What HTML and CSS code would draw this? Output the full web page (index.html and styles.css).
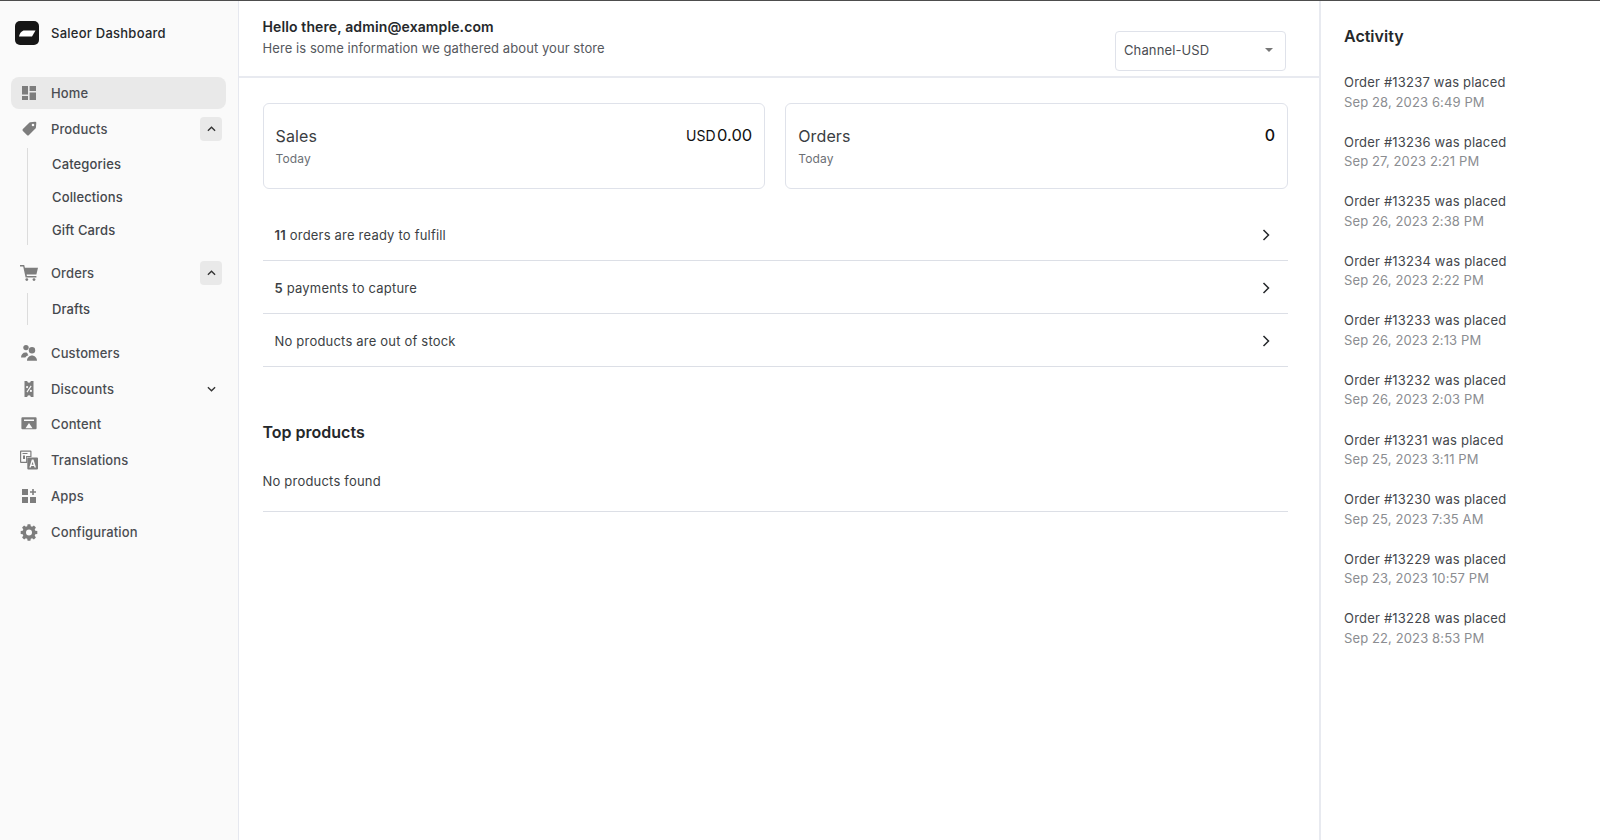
FILE: index.html
```html
<!DOCTYPE html>
<html lang="en">
<head>
  <meta charset="UTF-8" />
  <title>Saleor Dashboard</title>
  <link rel="stylesheet" href="styles.css">
</head>
<body>
  <div class="app">

    <aside class="sidebar">
      <div class="brand">
        <svg class="brand-logo" viewBox="0 0 24 24"><rect width="24" height="24" rx="5" fill="#161616"/><path d="M8.500 9.500h12L17 15.500H4c.6-3 2-5 4.500-6z" fill="#fff"/></svg>
        <span>Saleor Dashboard</span>
      </div>

      <nav class="nav">
        <a class="nav-item active">
          <svg class="nav-icon" viewBox="0 0 16 16"><path d="M1 1h6v8.500H1zM8.600 1H15v5H8.600zM8.600 7.500H15V15H8.600zM1 11h6v4H1z"/></svg>
          Home
        </a>
        <a class="nav-item">
          <svg class="nav-icon" viewBox="0 0 16 16"><path fill-rule="evenodd" d="M9.400 1.200L14 .8a1.200 1.200 0 0 1 1.300 1.300l-.4 4.600a1.500 1.500 0 0 1-.45.9L8 14.100a1.500 1.500 0 0 1-2.100 0L1.900 10.100a1.500 1.500 0 0 1 0-2.100l6.600-6.400a1.500 1.500 0 0 1 .9-.4zM12 5.300a1.300 1.300 0 1 0 0-2.600 1.300 1.300 0 0 0 0 2.600z"/></svg>
          Products
          <span class="toggle open"><svg viewBox="0 0 10 6"><path d="M1 5l4-4 4 4"/></svg></span>
        </a>
        <div class="subnav">
          <a>Categories</a>
          <a>Collections</a>
          <a>Gift Cards</a>
        </div>
        <a class="nav-item">
          <svg class="nav-icon" viewBox="0 0 16 16"><path d="M-1 0h4.200l.7 2.800H17l-1.600 6.800H5.600l.3 1.400h9.500v1.400H4.600L2.200 1.400H-1z"/><circle cx="5.800" cy="14.600" r="1.400"/><circle cx="13" cy="14.600" r="1.400"/></svg>
          Orders
          <span class="toggle open"><svg viewBox="0 0 10 6"><path d="M1 5l4-4 4 4"/></svg></span>
        </a>
        <div class="subnav subnav-short">
          <a>Drafts</a>
        </div>
        <a class="nav-item">
          <svg class="nav-icon" viewBox="0 0 16 16"><circle cx="5" cy="2.600" r="2.700"/><circle cx="11" cy="5.200" r="3.200"/><path d="M0 12.500c0-3 2-5 4.500-5 .7 0 1.300.1 1.800.4.200 1 .5 1.700 1.200 2.400-1.700.7-2.700 1.500-3.200 2.200zM6 15.800c0-3 2.500-5.200 5-5.200s5 2.200 5 5.200z"/></svg>
          Customers
        </a>
        <a class="nav-item">
          <svg class="nav-icon" viewBox="0 0 16 16"><path fill-rule="evenodd" d="M3.500 0h2.700a1.800 1.800 0 0 0 3.600 0h2.700v16H9.800a1.800 1.800 0 0 0-3.600 0H3.500zM9.700 4.600L5.500 10.800l.9.600 4.200-6.200zM6.100 5a1.100 1.100 0 1 0 0 2.200 1.100 1.100 0 0 0 0-2.200zM9.900 8.800a1.100 1.100 0 1 0 0 2.200 1.100 1.100 0 0 0 0-2.200z"/></svg>
          Discounts
          <span class="toggle"><svg viewBox="0 0 10 6"><path d="M1 1l4 4 4-4"/></svg></span>
        </a>
        <a class="nav-item">
          <svg class="nav-icon" viewBox="0 0 16 16"><path fill-rule="evenodd" d="M1.400 1.300h13.200a1 1 0 0 1 1 1v10a1 1 0 0 1-1 1H1.400a1 1 0 0 1-1-1v-10a1 1 0 0 1 1-1zM3 3.500V5h10V3.500zM8 7l-3.500 5.200h7z"/></svg>
          Content
        </a>
        <a class="nav-item">
          <svg class="nav-icon" viewBox="0 0 16 16"><path fill-rule="evenodd" d="M0-1.500h9.500a1 1 0 0 1 1 1V5H6.300v6H0a1 1 0 0 1-1-1V-.5a1 1 0 0 1 1-1zM.2-.3V9.800h4.900V4h4.200V-.3z"/><path d="M1.500 1h5v1h-5zM2 3.500h2v3.500H2z"/><path fill-rule="evenodd" d="M7.300 5.500H16a1 1 0 0 1 1 1v10a1 1 0 0 1-1 1H7.300a1 1 0 0 1-1-1v-10a1 1 0 0 1 1-1zM10.800 7.500L8.300 15.500h1.500l.5-1.600h2.700l.5 1.600h1.500l-2.500-8zm.8 2.200l.9 3h-1.800z"/></svg>
          Translations
        </a>
        <a class="nav-item">
          <svg class="nav-icon" viewBox="0 0 16 16"><path d="M1 1h6v6H1zM1 9h6v6H1zM9 9h6v6H9zM11.200 1h1.600v2.200H15v1.600h-2.200V7h-1.600V4.800H9V3.200h2.200z"/></svg>
          Apps
        </a>
        <a class="nav-item">
          <svg class="nav-icon" viewBox="0 0 16 16"><path fill-rule="evenodd" d="M6.600.2h2.800l.4 2 1.300.6 1.800-1.200 2 2-1.200 1.800.6 1.300 2 .4v2.800l-2 .4-.6 1.300 1.200 1.800-2 2-1.800-1.200-1.300.6-.4 2H6.600l-.4-2-1.300-.6-1.800 1.200-2-2 1.200-1.800-.6-1.300-2-.4V7.100l2-.4.6-1.300-1.200-1.800 2-2 1.800 1.200 1.300-.6zM8 5.500a3 3 0 1 0 0 6 3 3 0 0 0 0-6z"/></svg>
          Configuration
        </a>
      </nav>
    </aside>

    <main class="main">
      <header class="topbar">
        <div>
          <div class="hello">Hello there, admin@example.com</div>
          <div class="hello-sub">Here is some information we gathered about your store</div>
        </div>
        <div class="channel">
          Channel-USD
          <span class="caret"></span>
        </div>
      </header>

      <div class="content">
        <div class="cards">
          <div class="card">
            <div>
              <div class="card-title">Sales</div>
              <div class="card-sub">Today</div>
            </div>
            <div class="card-value"><small>USD</small><span class="money">0.00</span></div>
          </div>
          <div class="card">
            <div>
              <div class="card-title">Orders</div>
              <div class="card-sub">Today</div>
            </div>
            <div class="card-value">0</div>
          </div>
        </div>

        <div class="rows">
          <a class="row"><span><b>11</b> orders are ready to fulfill</span><svg class="chevron" viewBox="0 0 8 12"><path d="M1.500 1l5 5-5 5"/></svg></a>
          <a class="row"><span><b>5</b> payments to capture</span><svg class="chevron" viewBox="0 0 8 12"><path d="M1.500 1l5 5-5 5"/></svg></a>
          <a class="row"><span>No products are out of stock</span><svg class="chevron" viewBox="0 0 8 12"><path d="M1.500 1l5 5-5 5"/></svg></a>
        </div>

        <h2 class="section-title">Top products</h2>
        <div class="empty">No products found</div>
      </div>
    </main>

    <aside class="activity">
      <h2>Activity</h2>
      <ul>
        <li>Order #13237 was placed<time>Sep 28, 2023 6:49 PM</time></li>
        <li>Order #13236 was placed<time>Sep 27, 2023 2:21 PM</time></li>
        <li>Order #13235 was placed<time>Sep 26, 2023 2:38 PM</time></li>
        <li>Order #13234 was placed<time>Sep 26, 2023 2:22 PM</time></li>
        <li>Order #13233 was placed<time>Sep 26, 2023 2:13 PM</time></li>
        <li>Order #13232 was placed<time>Sep 26, 2023 2:03 PM</time></li>
        <li>Order #13231 was placed<time>Sep 25, 2023 3:11 PM</time></li>
        <li>Order #13230 was placed<time>Sep 25, 2023 7:35 AM</time></li>
        <li>Order #13229 was placed<time>Sep 23, 2023 10:57 PM</time></li>
        <li>Order #13228 was placed<time>Sep 22, 2023 8:53 PM</time></li>
      </ul>
    </aside>

  </div>
</body>
</html>
```

FILE: styles.css
```css
html, body {
  margin: 0;
  padding: 0;
  height: 100%;
  background: #fff;
  color: #25282b;
  font-family: Inter, 'Noto Sans', sans-serif;
  font-size: 13px;
  letter-spacing: 0.12px;
  overflow: hidden;
}

.app {
  display: flex;
  height: 840px;
  box-sizing: border-box;
  border-top: 1px solid #4d4d4d;
}

/* left nav */
.sidebar {
  width: 239px;
  flex: none;
  box-sizing: border-box;
  background: #fafafa;
  border-right: 1px solid #e6e8ef;
  padding: 0 12px 0 11px;
}

.brand {
  display: flex;
  align-items: center;
  gap: 12px;
  height: 64px;
  padding-left: 4px;
  font-weight: 500;
  letter-spacing: 0.25px;
  color: #25282b;
}

.brand-logo {
  width: 24px;
  height: 24px;
}

.nav {
  margin-top: 12px;
}

.nav-item {
  display: flex;
  align-items: center;
  height: 32px;
  margin-bottom: 3.7px;
  padding-left: 10px;
  border-radius: 8px;
  font-weight: 500;
  color: #4a4d52;
}

.nav-item.active {
  background: #e9e9e9;
}

.nav-icon {
  width: 16px;
  height: 16px;
  margin-right: 14px;
  fill: #7d7d7d;
  flex: none;
  overflow: visible;
}

.toggle {
  margin-left: auto;
  margin-right: 4px;
  width: 22px;
  height: 24px;
  border-radius: 4px;
  display: flex;
  align-items: center;
  justify-content: center;
}

.toggle.open {
  background: #e9e9e9;
}

.toggle svg {
  width: 9px;
  height: 6px;
  fill: none;
  stroke: #333;
  stroke-width: 1.5;
}

.subnav {
  display: flex;
  flex-direction: column;
  margin: 0 0 12px 16px;
  padding-left: 24px;
  border-left: 1px solid #dcdcdc;
  height: 97px;
}

.subnav a {
  height: 32.8px;
  line-height: 32.8px;
  font-weight: 500;
  color: #44474c;
}

.subnav-short {
  height: 32px;
}

/* center column */
.main {
  flex: 1;
  min-width: 0;
  border-right: 2px solid #e8eaf0;
}

.topbar {
  display: flex;
  justify-content: space-between;
  align-items: flex-start;
  height: 77px;
  box-sizing: border-box;
  border-bottom: 2px solid #e8eaf0;
  padding: 17px 33px 0 23.5px;
}

.hello {
  font-size: 14px;
  font-weight: 600;
  line-height: 18px;
}

.hello-sub {
  margin-top: 3px;
  line-height: 18px;
  letter-spacing: 0.07px;
  color: #55585d;
}

.channel {
  width: 171px;
  height: 40px;
  margin-top: 13px;
  box-sizing: border-box;
  display: flex;
  align-items: center;
  justify-content: space-between;
  padding: 0 12px 2px 8px;
  border: 1px solid #dfe2ea;
  border-radius: 4px;
  color: #4a4d52;
}

.caret {
  border-left: 4px solid transparent;
  border-right: 4px solid transparent;
  border-top: 4px solid #777;
}

.content {
  padding: 25px 31px 0 23.5px;
}

.cards {
  display: flex;
  gap: 20px;
}

.card {
  flex: 1;
  height: 86px;
  box-sizing: border-box;
  display: flex;
  justify-content: space-between;
  padding: 22px 12px 0 12px;
  border: 1px solid #dfe2ea;
  border-radius: 6px;
}

.card-title {
  font-size: 16px;
  line-height: 20px;
  color: #3a3d42;
}

.card-sub {
  margin-top: 5px;
  font-size: 12px;
  line-height: 16px;
  color: #6c6f75;
}

.card-value {
  font-size: 16px;
  font-weight: 500;
  line-height: 19px;
  letter-spacing: 0;
  color: #111;
}

.card-value small {
  font-size: 14px;
  font-weight: 400;
  margin-right: 1.5px;
}

.money {
  font-size: 16.5px;
  font-weight: 400;
}

.rows {
  margin-top: 19px;
}

.row {
  display: flex;
  justify-content: space-between;
  align-items: center;
  height: 53px;
  box-sizing: border-box;
  padding: 1px 18px 0 12px;
  border-bottom: 1px solid #dcdfe6;
  letter-spacing: 0.2px;
  color: #3c3f44;
}

.row b {
  font-weight: 600;
}

.chevron {
  width: 8px;
  height: 12px;
  fill: none;
  stroke: #25282b;
  stroke-width: 1.5;
}

.section-title {
  margin: 55px 0 0;
  font-size: 16px;
  font-weight: 600;
  line-height: 20px;
  letter-spacing: 0;
}

.empty {
  margin-top: 30px;
  padding-bottom: 21px;
  line-height: 18px;
  border-bottom: 1px solid #dcdfe6;
  letter-spacing: 0.2px;
  color: #3c3f44;
}

/* right column */
.activity {
  width: 279px;
  flex: none;
  box-sizing: border-box;
  padding: 25px 0 0 23px;
}

.activity h2 {
  margin: 0 0 27px;
  font-size: 16px;
  font-weight: 600;
  line-height: 20px;
  letter-spacing: 0;
}

.activity ul {
  list-style: none;
  margin: 0;
  padding: 0;
}

.activity li {
  height: 59.6px;
  line-height: 19.5px;
  letter-spacing: 0.2px;
  color: #44474c;
}

.activity time {
  display: block;
  letter-spacing: 0.12px;
  color: #8b8d91;
}
```
